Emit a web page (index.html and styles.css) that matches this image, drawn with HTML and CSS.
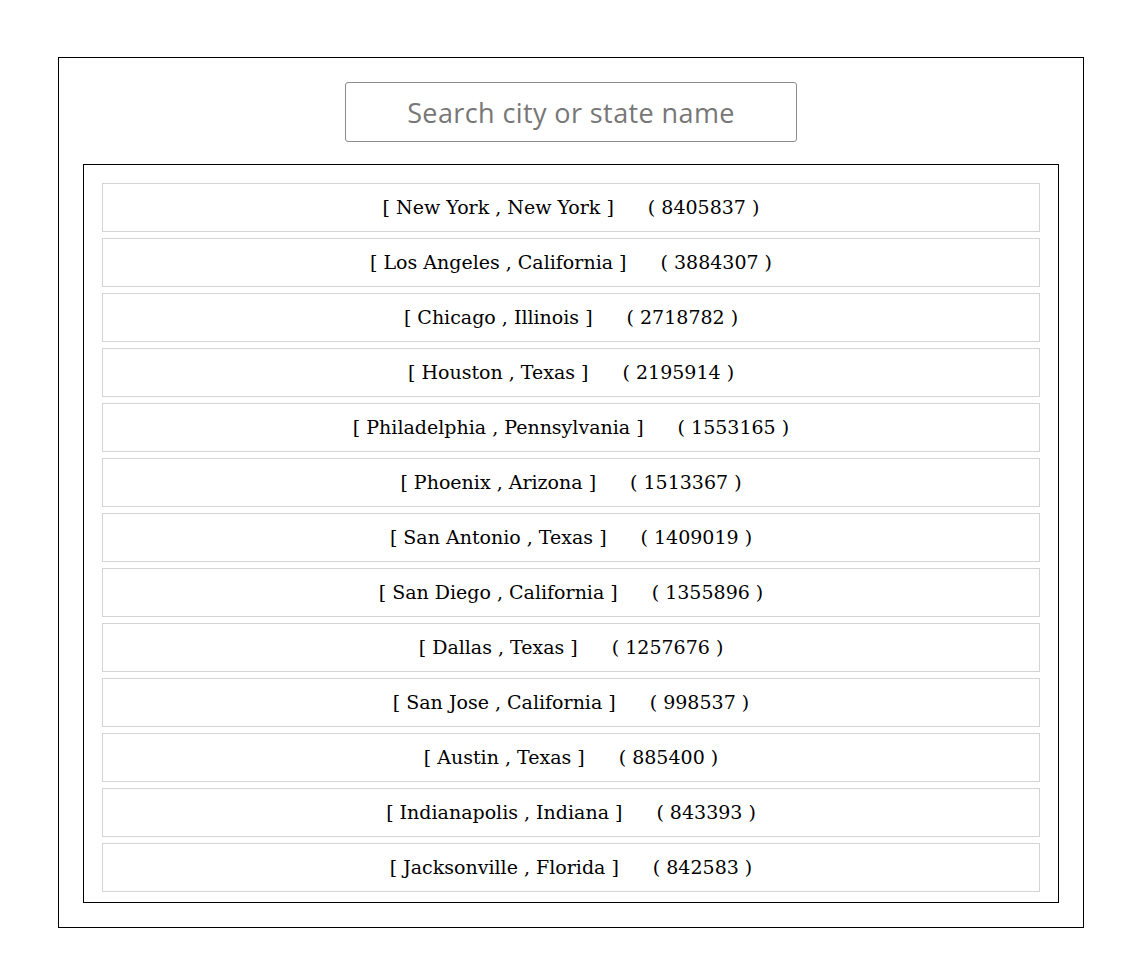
FILE: index.html
```html
<!DOCTYPE html>
<html>
<head>
<meta charset="utf-8">
<link rel="stylesheet" href="styles.css">
</head>
<body>
<div class="app">
  <div class="search-wrap">
    <input class="search" type="text" placeholder="Search city or state name">
  </div>
  <ul class="list">
    <li class="row"><span>[ New York , New York ]</span><span class="pop">( 8405837 )</span></li>
    <li class="row"><span>[ Los Angeles , California ]</span><span class="pop">( 3884307 )</span></li>
    <li class="row"><span>[ Chicago , Illinois ]</span><span class="pop">( 2718782 )</span></li>
    <li class="row"><span>[ Houston , Texas ]</span><span class="pop">( 2195914 )</span></li>
    <li class="row"><span>[ Philadelphia , Pennsylvania ]</span><span class="pop">( 1553165 )</span></li>
    <li class="row"><span>[ Phoenix , Arizona ]</span><span class="pop">( 1513367 )</span></li>
    <li class="row"><span>[ San Antonio , Texas ]</span><span class="pop">( 1409019 )</span></li>
    <li class="row"><span>[ San Diego , California ]</span><span class="pop">( 1355896 )</span></li>
    <li class="row"><span>[ Dallas , Texas ]</span><span class="pop">( 1257676 )</span></li>
    <li class="row"><span>[ San Jose , California ]</span><span class="pop">( 998537 )</span></li>
    <li class="row"><span>[ Austin , Texas ]</span><span class="pop">( 885400 )</span></li>
    <li class="row"><span>[ Indianapolis , Indiana ]</span><span class="pop">( 843393 )</span></li>
    <li class="row"><span>[ Jacksonville , Florida ]</span><span class="pop">( 842583 )</span></li>
  </ul>
</div>
</body>
</html>
```

FILE: styles.css
```css
html, body {
  margin: 0;
  padding: 0;
  background: #ffffff;
}
body {
  padding: 57px 56px 0 58px;
  font-family: "DejaVu Serif", serif;
}
.app {
  width: 976px;
  border: 1px solid #000;
  padding: 24px;
}
.search-wrap {
  display: flex;
  justify-content: center;
  margin-bottom: 22px;
}
.search {
  box-sizing: border-box;
  width: 452px;
  height: 60px;
  border: 1px solid #8c8c8c;
  border-radius: 3px;
  text-align: center;
  font-family: "Open Sans", sans-serif;
  font-size: 27px;
  letter-spacing: 0.4px;
  color: #333;
  outline: none;
  padding: 0 10px;
}
.search::placeholder {
  color: #777;
}
.list {
  list-style: none;
  margin: 0;
  padding: 18px 18px 10px;
  border: 1px solid #000;
  display: flex;
  flex-direction: column;
  gap: 6px;
}
.row {
  box-sizing: border-box;
  height: 49px;
  padding-bottom: 2px;
  border: 1px solid #d4d4d4;
  display: flex;
  justify-content: center;
  align-items: center;
  font-size: 19px;
  color: #000;
}
.pop {
  margin-left: 34px;
}
```
